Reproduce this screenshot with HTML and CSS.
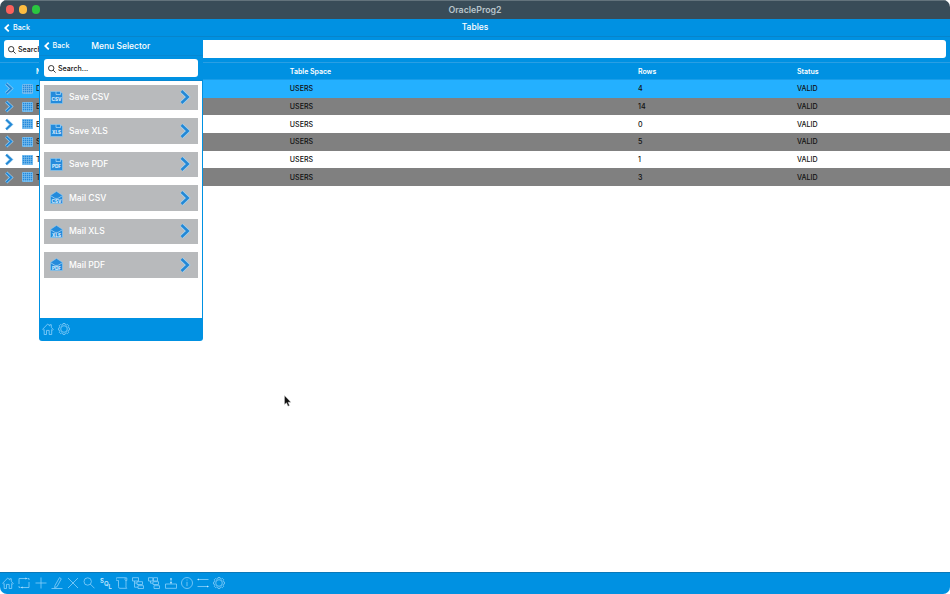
FILE: index.html
```html
<!DOCTYPE html>
<html lang="en">
<head>
<meta charset="utf-8">
<title>OracleProg2</title>
<link rel="stylesheet" href="styles.css">
</head>
<body>
<svg class="defs" width="0" height="0">
  <symbol id="home" viewBox="0 0 12 12"><path d="M.7 6.2 5.7 1 7.8 3V1.7h1.5v2.8l2 1.9-.8.8-.8-.7v5H7.2V7.4H4.5v4.1H2.2v-5l-.7.6z"/></symbol>
  <symbol id="gear" viewBox="0 0 12 12"><circle cx="6" cy="6" r="3.3"/><path d="M5 .5h2l.3 1.2 1 .4 1.1-.7 1.3 1.3-.7 1.1.4 1 1.2.3v1.8l-1.2.3-.4 1 .7 1.1-1.3 1.3-1.1-.7-1 .4-.3 1.1H5l-.3-1.1-1-.4-1.1.7-1.3-1.3.7-1.1-.4-1L.4 7V5.2l1.2-.3.4-1-.7-1.1 1.3-1.3 1.1.7 1-.4z"/></symbol>
  <symbol id="back" viewBox="0 0 6 8"><path d="M4.8.6 1.2 4l3.6 3.4"/></symbol>
  <symbol id="lens" viewBox="0 0 8 8"><circle cx="3.2" cy="3.2" r="2.7"/><path d="m5.2 5.2 2.4 2.4"/></symbol>
  <symbol id="chev" viewBox="0 0 12 16"><path class="halo" d="m2.5 2 6.3 6-6.3 6"/><path class="core" d="m2.5 2 6.3 6-6.3 6"/></symbol>
  <symbol id="grid" viewBox="0 0 11 10"><path class="gridbox" d="M.5.5h10v9H.5z"/><path class="gridline" d="M2.5 0v10M4.5 0v10M6.5 0v10M8.5 0v10M0 2.5h11M0 4.5h11M0 6.5h11M0 8.5h11"/></symbol>
  <symbol id="disk" viewBox="0 0 13 13"><path class="shape" d="M.5.5h9.8l2.2 2.2v9.8H.5z"/><path class="edge" d="M6 .5v3h4.5v-3"/></symbol>
  <symbol id="mail" viewBox="0 0 13 13"><path class="shape" d="M.5 4.4 6.5.4l6 4v8.1H.5z"/><path class="edge" d="m.8 4.8 4.2 2.6h3l4.2-2.6"/></symbol>
</svg>
<div class="window">
  <header class="titlebar">
    <div class="lights"><i class="red"></i><i class="yellow"></i><i class="green"></i></div>
    OracleProg2
  </header>
  <nav class="nav"><span class="back"><svg><use href="#back"/></svg>Back</span>Tables</nav>
  <div class="searchbar"><div class="search"><svg><use href="#lens"/></svg>Search...</div></div>
  <div class="row head"><span></span><span></span><span>N</span><span>Table Space</span><span>Rows</span><span>Status</span></div>
  <main class="rows">
    <div class="row selected"><svg class="chev"><use href="#chev"/></svg><svg class="grid"><use href="#grid"/></svg><span>D</span><span>USERS</span><span>4</span><span>VALID</span></div>
    <div class="row dark"><svg class="chev"><use href="#chev"/></svg><svg class="grid"><use href="#grid"/></svg><span>E</span><span>USERS</span><span>14</span><span>VALID</span></div>
    <div class="row"><svg class="chev"><use href="#chev"/></svg><svg class="grid"><use href="#grid"/></svg><span>E</span><span>USERS</span><span>0</span><span>VALID</span></div>
    <div class="row dark"><svg class="chev"><use href="#chev"/></svg><svg class="grid"><use href="#grid"/></svg><span>S</span><span>USERS</span><span>5</span><span>VALID</span></div>
    <div class="row"><svg class="chev"><use href="#chev"/></svg><svg class="grid"><use href="#grid"/></svg><span>T</span><span>USERS</span><span>1</span><span>VALID</span></div>
    <div class="row dark"><svg class="chev"><use href="#chev"/></svg><svg class="grid"><use href="#grid"/></svg><span>T</span><span>USERS</span><span>3</span><span>VALID</span></div>
  </main>
  <footer class="toolbar">
    <svg viewBox="0 0 12 12"><use href="#home"/></svg>
    <svg viewBox="0 0 12 12"><path d="M1 7V1.5h7M11 5v5.5H4M11 3V1.5H9.5M1 9v1.5h1.5"/><path class="tip" d="m7.5.5 1.8 1-1.8 1zM4.5 9.5l-1.8 1 1.8 1z"/></svg>
    <svg viewBox="0 0 12 12"><path d="M6 .5v11M.5 6h11"/></svg>
    <svg viewBox="0 0 12 12"><path d="M.5 11.5h11M4 8.5 8.5.6l1.8 1.2L6 9.7l-2.4 1z"/></svg>
    <svg viewBox="0 0 12 12"><path d="m1 1 10 10M11 1 1 11"/></svg>
    <svg viewBox="0 0 12 12"><circle cx="4.7" cy="4.5" r="3.7"/><path d="m7.3 7.1 4.2 4.2"/></svg>
    <svg viewBox="0 0 12 12"><text x="0" y="5.5">S</text><text x="4" y="8.5">Q</text><text x="8.5" y="11.5">L</text></svg>
    <svg viewBox="0 0 12 12"><path d="M2.5 3.5H1.2a1.4 1.4 0 0 1 0-2.8h8.3q-1.2 1.4 0 2.8h1.3V.9H9.5M2.5 3.5v6.2q0 1.6 1.3 1.6h7q-1.3-1-.8-2.5V3.5"/></svg>
    <svg viewBox="0 0 12 12"><path d="M.5.7h6v3.3h-6zM5 4.7h5.5v2.8H5zM6 8.7h5.5v2.8H6zM2.5 4v6.2H6M2.5 6H5"/></svg>
    <svg viewBox="0 0 12 12"><path d="M.5.7h4.3V4H.5zM5.5.7h4V4h-4zM2.5 4v2.2H5M5 4.7h5.5v2.8H5zM6 8.7h5.5v2.8H6z"/></svg>
    <svg viewBox="0 0 12 12"><path d="M.5 7h11v4.3H.5zM6 7V1"/><path class="tip" d="M5 2.5 6 .8l1 1.7zM5 5l1 1.7L7 5z"/></svg>
    <svg viewBox="0 0 12 12"><circle cx="6" cy="6" r="5.5"/><path d="M6 2.5v1M6 4.8v4.4"/></svg>
    <svg viewBox="0 0 12 12"><path d="M.5 2.5h11M.5 9.5h11"/><path class="tip" d="M2 1.5.3 2.5l1.7 1zM10 8.5l1.7 1-1.7 1z"/></svg>
    <svg viewBox="0 0 12 12"><use href="#gear"/></svg>
  </footer>
</div>
<aside class="popup">
  <nav class="popup-nav"><span class="back"><svg><use href="#back"/></svg>Back</span>Menu Selector</nav>
  <div class="popup-search"><div class="search"><svg><use href="#lens"/></svg>Search...</div></div>
  <div class="menu">
    <div class="item"><svg class="doc" viewBox="0 0 13 13"><use href="#disk"/><text x="6.5" y="10.4">CSV</text></svg><span>Save CSV</span><svg class="chev"><use href="#chev"/></svg></div>
    <div class="item"><svg class="doc" viewBox="0 0 13 13"><use href="#disk"/><text x="6.5" y="10.4">XLS</text></svg><span>Save XLS</span><svg class="chev"><use href="#chev"/></svg></div>
    <div class="item"><svg class="doc" viewBox="0 0 13 13"><use href="#disk"/><text x="6.5" y="10.4">PDF</text></svg><span>Save PDF</span><svg class="chev"><use href="#chev"/></svg></div>
    <div class="item"><svg class="doc" viewBox="0 0 13 13"><use href="#mail"/><text x="6.5" y="11.6">CSV</text></svg><span>Mail CSV</span><svg class="chev"><use href="#chev"/></svg></div>
    <div class="item"><svg class="doc" viewBox="0 0 13 13"><use href="#mail"/><text x="6.5" y="11.6">XLS</text></svg><span>Mail XLS</span><svg class="chev"><use href="#chev"/></svg></div>
    <div class="item"><svg class="doc" viewBox="0 0 13 13"><use href="#mail"/><text x="6.5" y="11.6">PDF</text></svg><span>Mail PDF</span><svg class="chev"><use href="#chev"/></svg></div>
  </div>
  <footer class="popup-foot"><svg viewBox="0 0 12 12"><use href="#home"/></svg><svg viewBox="0 0 12 12"><use href="#gear"/></svg></footer>
</aside>
<svg class="cursor" viewBox="0 0 8 12"><path d="M.5.6v9l2-1.9 1.5 3.5 1.5-.7L4 7.2h2.9z"/></svg>
</body>
</html>
```
FILE: styles.css
```css
* { box-sizing: border-box; }
body { margin: 0; background: #fff; font: 500 7px/1 Inter, "Liberation Sans", sans-serif; color: #111; }
svg { display: block; fill: none; flex: none; }
.defs { position: absolute; }
.window { height: 594px; display: flex; flex-direction: column; border-radius: 7px; overflow: hidden; background: #fff; }
.titlebar { height: 19px; display: grid; place-items: center; position: relative; background: #394c58; border-top: 1px solid #63737c; color: #b8c4cb; font-size: 8.8px; font-weight: 600; }
.lights { position: absolute; left: 5.5px; top: 4.4px; display: flex; gap: 5px; }
.lights i { width: 8.2px; height: 8.2px; border-radius: 50%; }
.red { background: #fc605b; }
.yellow { background: #fdbc40; }
.green { background: #2ac640; }
.nav { height: 18px; display: grid; place-items: center; position: relative; background: #0091e2; border-bottom: 1px solid #0784cb; color: #fff; font-size: 8.5px; }
.back { position: absolute; left: 4px; top: 50%; transform: translateY(-50%); display: flex; align-items: center; gap: 3px; font-size: 7.2px; }
.back svg { width: 6px; height: 8px; stroke: #fff; stroke-width: 1.8; }
.searchbar { height: 26px; padding: 3px 4px 5px; background: #0091e2; border-bottom: 1px solid #2a9fe4; }
.search { height: 18px; padding: 1px 0 0 4px; display: flex; align-items: center; gap: 2px; background: #fff; border-radius: 3px; font-size: 7.1px; }
.search svg { width: 8px; height: 8px; stroke: #222; stroke-width: .9; }
.row { height: 17.7px; display: grid; grid-template-columns: 21.5px 14.5px 253.8px 348.2px 159px 1fr; align-items: center; font-size: 7.1px; }
.head { height: 17px; background: #0091e2; color: #fff; font-size: 7px; font-weight: 600; border-bottom: 1px solid #189ce8; }
.rows { flex: 1; }
.selected { background: #24b0ff; }
.dark { background: #808080; }
.row .chev { width: 10px; height: 13px; margin-left: 4px; }
.grid { width: 11px; height: 10px; }
.gridbox { fill: #2389dc; stroke: #69b7ef; }
.gridline { stroke: #83c2ee; stroke-width: .6; }
.halo { stroke: #a4d4f4; stroke-width: 3.9; }
.core { stroke: #2488d5; stroke-width: 2.5; }
.row .core { stroke-width: 2.8; }
.row .halo { stroke: #63b2e8; stroke-width: 3.4; }
.dark .halo { stroke: #4b92c8; }
.selected .core { stroke: #2585cb; }
.selected .halo { stroke: #2d94da; }
.toolbar { height: 22px; padding: 0 2px 2px; display: flex; align-items: center; gap: 4.25px; background: #0091e2; border-top: 1px solid #0a78b8; }
.toolbar svg, .popup-foot svg { width: 12px; height: 12px; stroke: #8cd0fa; stroke-width: .8; }
.toolbar .tip { fill: #c6e9ff; stroke: none; }
.toolbar text { fill: #c6e9ff; stroke: none; font-size: 6px; font-weight: 600; }
.popup { position: absolute; left: 38.5px; top: 37px; width: 164.5px; height: 304px; display: flex; flex-direction: column; background: #0091e2; border-radius: 0 0 3px 3px; overflow: hidden; }
.popup-nav { height: 19px; display: grid; place-items: center; position: relative; border-bottom: 1px solid #0788d2; color: #fff; font-size: 8.5px; }
.popup-nav .back { left: 5px; }
.popup-search { height: 25px; padding: 3px 5px 3px 5.5px; border-bottom: 1px solid #0788d2; }
.menu { flex: 1; margin: 0 1px 0 1.5px; padding: 3.7px 4px; background: #fff; display: flex; flex-direction: column; gap: 8px; }
.item { height: 25.5px; padding: 0 7px 0 6px; display: flex; align-items: center; background: #b8babc; color: #fff; font-size: 8.6px; font-weight: 500; }
.item span { flex: 1; margin-left: 6px; }
.item .chev { width: 12px; height: 16px; }
.doc { width: 13px; height: 13px; }
.shape { fill: #248bdc; stroke: #8dcbf5; stroke-width: .6; }
.edge { stroke: #b4dcf7; stroke-width: .7; }
.doc text { fill: #e6f5ff; font-size: 4.6px; font-weight: 700; text-anchor: middle; }
.popup-foot { height: 23px; padding: 0 0 2px 3.5px; display: flex; align-items: center; gap: 4px; }
.cursor { position: absolute; left: 284px; top: 395px; width: 8px; height: 12px; fill: #111; stroke: #ddd; stroke-width: .4; }
```
